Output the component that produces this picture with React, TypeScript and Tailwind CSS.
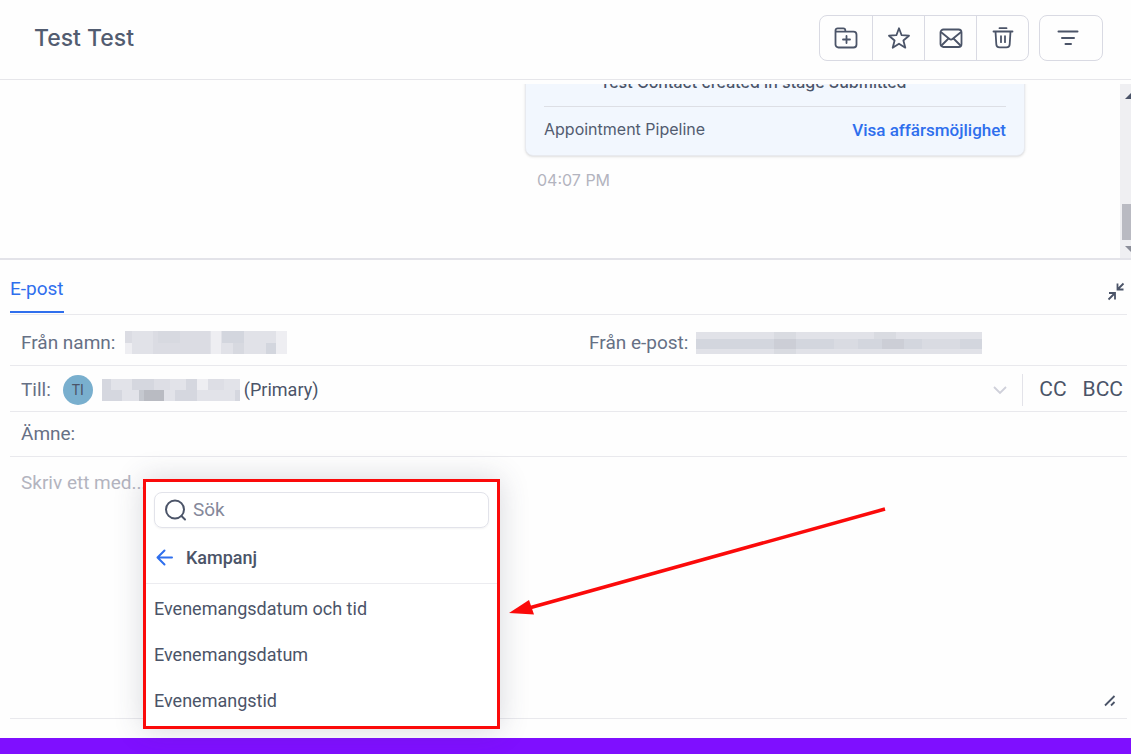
import React from "react";

const FolderPlusIcon: React.FC = () => (
  <svg className="h-6 w-6" viewBox="0 0 24 24" fill="none" stroke="currentColor" strokeWidth="1.8" strokeLinecap="round" strokeLinejoin="round" aria-hidden="true">
    <path d="M1.5 6.5V4.5A2.2 2.2 0 0 1 3.7 2.3h5.6a2 2 0 0 1 2 2v1.4M2.5 5.7H19.5a3 3 0 0 1 3 3v9.800a3 3 0 0 1-3 3h-15a3 3 0 0 1-3-3V6.5c0-.5.4-.8 1-.8M12.500 10v7M9 13.500h7" />
  </svg>
);

const StarIcon: React.FC = () => (
  <svg className="h-6 w-6" viewBox="0 0 24 24" fill="none" stroke="currentColor" strokeWidth="1.8" strokeLinejoin="round" aria-hidden="true">
    <path d="M12 2.300l2.600 6.900 7.400.5-5.600 4.800 1.900 7.200L12 17.700l-6.300 4 1.900-7.200L2 9.700l7.400-.5z" />
  </svg>
);

const MailIcon: React.FC = () => (
  <svg className="h-6 w-6" viewBox="0 0 24 24" fill="none" stroke="currentColor" strokeWidth="1.8" strokeLinecap="round" strokeLinejoin="round" aria-hidden="true">
    <rect x="1.5" y="3.5" width="21" height="17.5" rx="3" />
    <path d="M2.500 6.500l8 6.500a2.400 2.400 0 0 0 3 0l8-6.500M2.500 19.500l6.500-6.500M21.500 19.500L15 13" />
  </svg>
);

const TrashIcon: React.FC = () => (
  <svg className="h-6 w-6" viewBox="0 0 24 24" fill="none" stroke="currentColor" strokeWidth="1.8" strokeLinecap="round" strokeLinejoin="round" aria-hidden="true">
    <path d="M8.500 2.200h7M2.500 5.500h19M4.500 5.500l.8 12.700a3.300 3.300 0 0 0 3.300 3.200h6.800a3.300 3.300 0 0 0 3.300-3.200l.8-12.700M10 10.200v6M14 10.200v6" />
  </svg>
);

const tools = [
  { label: "Lägg till i mapp", Icon: FolderPlusIcon },
  { label: "Stjärnmärk", Icon: StarIcon },
  { label: "Markera som oläst", Icon: MailIcon },
  { label: "Ta bort", Icon: TrashIcon },
];

const Header: React.FC = () => (
  <header className="flex h-20 items-center justify-between border-b border-[#e6e6ea] pr-7 pl-8.5">
    <h1 className="pb-0.5 text-[23px] font-medium text-[#525c70]">Test Test</h1>
    <div className="flex gap-2.5 pb-1">
      <div className="flex overflow-hidden rounded-lg border border-[#d9dae3]">
        {tools.map(({ label, Icon }) => (
          <button
            key={label}
            type="button"
            aria-label={label}
            className="flex h-11 w-13 items-center justify-center border-[#d9dae3] text-[#4b5468] not-first:border-l"
          >
            <Icon />
          </button>
        ))}
      </div>
      <button type="button" aria-label="Filtrera" className="flex w-16 items-center justify-center rounded-lg border border-[#d9dae3] pr-1.5 text-[#4b5468]">
        <svg className="h-6 w-6" viewBox="0 0 24 24" fill="none" stroke="currentColor" strokeWidth="2" strokeLinecap="round" aria-hidden="true">
          <path d="M2.500 5.500h19M6 12h12M9.500 18h5.500" />
        </svg>
      </button>
    </div>
  </header>
);

const Conversation: React.FC = () => (
  <section className="flex h-45 border-b-2 border-[#e3e3e9] pt-1">
    <div className="flex flex-1 flex-col items-end justify-end overflow-hidden pr-[95px] pb-[66px]">
      <article className="w-[500px] shrink-0 rounded-lg border border-[#e8eaef] bg-[#f2f7fe] px-4.5 pt-6 pb-2.5 shadow-sm">
        <p className="pb-3 pl-14 text-base font-medium text-[#4b5468]">Test Contact created in stage Submitted</p>
        <div className="flex items-center justify-between border-t border-[#dddfe5] pt-2.5">
          <span className="pb-1 text-base text-[#525c70]">Appointment Pipeline</span>
          <a href="#opportunity" className="font-['Roboto',sans-serif] text-[17px] font-medium text-[#2f6fed]">
            Visa affärsmöjlighet
          </a>
        </div>
      </article>
      <time className="mt-3 w-[500px] pl-3 text-base text-[#b3b4bf]">04:07 PM</time>
    </div>
    <div className="flex w-[11px] flex-col overflow-hidden bg-[#efeff2]" aria-hidden="true">
      <svg className="mt-2 ml-1 h-4 w-4 shrink-0" viewBox="0 0 16 16">
        <path d="M1 7l7-7 7 7z" fill="#4b5468" />
      </svg>
      <div className="mt-auto ml-0.5 h-9 shrink-0 bg-[#b9bac2]" />
      <svg className="mt-1 ml-1 h-3.5 w-4 shrink-0" viewBox="0 0 16 14">
        <path d="M1 2l7 7 7-7z" fill="#8b8e99" />
      </svg>
    </div>
  </section>
);

const MaskedName: React.FC = () => (
  <svg className="ml-2.5 h-[23px] w-[162px] shrink-0" viewBox="0 0 162 23" shapeRendering="crispEdges" role="img" aria-label="Dolt namn">
    <path fill="#e1e2e8" d="M0 0h162v23H0z" />
    <path fill="#dbdce3" d="M0 0h7v12H0zM28 0h57v23H28z" />
    <path fill="#d7d9e0" d="M33 0h22v12H33zM108 12h11v11h-11z" />
    <path fill="#d3d6de" d="M97 0h22v12H97zM141 12h11v11h-11z" />
    <path fill="#eeeef2" d="M0 12h7v11H0zM86 0h10v23H86zM151 0h11v23h-11z" />
  </svg>
);

const MaskedEmail: React.FC = () => (
  <svg className="ml-2 h-[22px] w-[286px] shrink-0" viewBox="0 0 286 22" shapeRendering="crispEdges" role="img" aria-label="Dold e-post">
    <path fill="#e1e2e8" d="M0 0h286v22H0z" />
    <path fill="#d3d6de" d="M0 7h286v10H0z" />
    <path fill="#d9dbe1" d="M78 0h22v7H78zM78 17h22v5H78zM178 0h22v7h-22z" />
    <path fill="#ccced6" d="M78 7h22v10H78zM186 7h22v10h-22z" />
    <path fill="#d9dbe2" d="M138 7h24v10h-24zM226 7h38v10h-38z" />
  </svg>
);

const MaskedRecipient: React.FC = () => (
  <svg className="ml-[9px] h-[22px] w-[138px] shrink-0" viewBox="0 0 138 22" shapeRendering="crispEdges" role="img" aria-label="Dold mottagare">
    <path fill="#e2e3e9" d="M0 0h138v22H0z" />
    <path fill="#d5d7df" d="M0 0h9v22H0zM30 0h22v11H30zM84 0h11v22H84zM9 11h11v11H9zM73 11h11v11H73zM133 11h5v11h-5z" />
    <path fill="#c5c8cf" d="M37 11h6v11h-6z" />
    <path fill="#b9bbc2" d="M42 11h20v11H42z" />
    <path fill="#eeeef2" d="M95 0h11v11H95z" />
    <path fill="#dddee5" d="M52 0h16v11H52zM106 0h16v11h-16z" />
  </svg>
);

const VariablePicker: React.FC = () => (
  <div className="absolute top-[22px] left-[133px] w-[357px] border-[3px] border-[#fb0a0a] bg-white pt-2.5 text-[#4b5468] shadow-[0_0_28px_rgba(60,65,90,0.2)]">
    <label className="mx-2 flex h-9 items-center gap-1.5 rounded-lg border border-[#e2e3ea] px-2 shadow-xs">
      <svg className="h-6 w-6 shrink-0" viewBox="0 0 24 24" fill="none" stroke="currentColor" strokeWidth="2" strokeLinecap="round" aria-hidden="true">
        <circle cx="12" cy="11.5" r="9" />
        <path d="M18.500 18l3.500 3.500" />
      </svg>
      <input type="search" aria-label="Sök" placeholder="Sök" className="min-w-0 flex-1 text-[19px] outline-none placeholder:text-[#85889a]" />
    </label>
    <button type="button" className="flex h-14 w-full items-center gap-3 border-b border-[#ececf0] px-2.5 pt-1 font-medium">
      <svg className="h-[18px] w-[18px]" viewBox="0 0 18 18" fill="none" stroke="#2f6fed" strokeWidth="2" strokeLinecap="round" strokeLinejoin="round" aria-hidden="true">
        <path d="M16 8.500H1.500M8.500 1.500l-7 7 7 7" />
      </svg>
      Kampanj
    </button>
    <ul className="pt-0.5 pb-0.5">
      {["Evenemangsdatum och tid", "Evenemangsdatum", "Evenemangstid"].map((item) => (
        <li key={item}>
          <button type="button" className="h-[46px] w-full px-2 text-left">
            {item}
          </button>
        </li>
      ))}
    </ul>
  </div>
);

// Starts at the tip, just right of the picker
const PointerArrow: React.FC = () => (
  <svg className="pointer-events-none absolute top-[48px] left-[499px] h-[112px] w-[378px]" viewBox="0 0 378 112" aria-hidden="true">
    <path d="M20 103L376 4" stroke="#fb0a0a" strokeWidth="3.5" />
    <path d="M0 108l20-13 5 14.500z" fill="#fb0a0a" />
  </svg>
);

const Composer: React.FC = () => (
  <section className="flex flex-1 flex-col pr-1 pl-2.5 font-['Roboto',sans-serif] text-lg text-[#667085]">
    <div className="flex h-[55px] items-center justify-between border-b border-[#e9e9ed]">
      <button type="button" className="h-[52px] border-b-2 border-[#2f6fed] pt-1.5 text-[19px] text-[#2f6fed]">
        E-post
      </button>
      <button type="button" aria-label="Minimera" className="pt-2.5 text-[#4b5468]">
        <svg className="h-5 w-5" viewBox="0 0 20 20" fill="none" stroke="currentColor" strokeWidth="1.8" aria-hidden="true">
          <path d="M16.500 1.500L11 7M10.500 1.500V7.500H16.500M1.500 17.500l5.500-5.500M2 11H8V17.500" />
        </svg>
      </button>
    </div>
    <div className="flex h-[51px] items-center border-b border-[#e9e9ed] pt-1.5 pl-[11px] text-[19px]">
      <div className="flex w-[51%] items-center">
        <span>Från namn:</span>
        <MaskedName />
      </div>
      <div className="flex items-center pl-1">
        <span>Från e-post:</span>
        <MaskedEmail />
      </div>
    </div>
    <div className="flex h-[46px] items-center border-b border-[#e9e9ed] pt-0.5 pl-[11px] text-[19px]">
      <span>Till:</span>
      <span className="ml-3 flex h-[30px] w-[30px] items-center justify-center rounded-full bg-[#79afce] text-sm text-[#4b5468]">TI</span>
      <MaskedRecipient />
      <span className="ml-1 text-lg text-[#4b5468]">(Primary)</span>
      <button type="button" aria-label="Visa mottagare" className="ml-auto">
        <svg className="h-4 w-4" viewBox="0 0 16 16" fill="none" stroke="#cfd0da" strokeWidth="1.8" aria-hidden="true">
          <path d="M2 5l6 6 6-6" />
        </svg>
      </button>
      <div className="ml-3.5 flex h-8 items-center gap-4 border-l border-[#e3e3e9] pr-1 pl-4 text-[21px] text-[#4b5468]">
        <button type="button">CC</button>
        <button type="button">BCC</button>
      </div>
    </div>
    <label className="flex h-[45px] items-center border-b border-[#e9e9ed] pl-[11px] text-[19px]">
      Ämne:
      <input type="text" className="ml-2 min-w-0 flex-1 outline-none" />
    </label>
    <div className="relative flex flex-1 flex-col border-b border-[#e9e9ed]">
      <textarea aria-label="Meddelande" placeholder="Skriv ett med..." className="flex-1 resize-none px-[11px] pt-[11px] text-[19px] outline-none placeholder:text-[#b3b4bf]" />
      <svg className="absolute right-2.5 bottom-2.5 h-3.5 w-3.5" viewBox="0 0 14 14" fill="none" stroke="#4b5468" strokeWidth="1.8" aria-hidden="true">
        <path d="M2 11.500L11.500 2M8 11.500l3.500-3.500" />
      </svg>
      <VariablePicker />
      <PointerArrow />
    </div>
    <div className="h-[19px]" />
  </section>
);

const App: React.FC = () => (
  <main className="flex min-h-screen flex-col bg-[#fefefe] font-['Inter',sans-serif]">
    <Header />
    <Conversation />
    <Composer />
    <footer className="h-4 bg-[#7f0fff]" />
  </main>
);

export default App;
